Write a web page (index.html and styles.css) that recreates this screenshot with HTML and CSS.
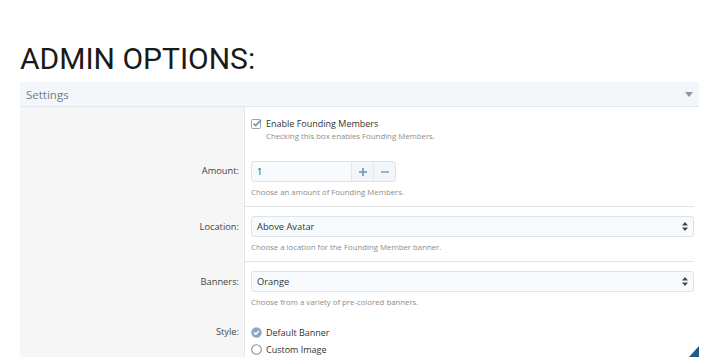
FILE: index.html
```html
<!DOCTYPE html>
<html>
<head>
<meta charset="utf-8">
<link rel="stylesheet" href="styles.css">
</head>
<body>
<div class="page">
  <h1 class="title">ADMIN OPTIONS:</h1>
  <div class="panel">
    <div class="panel-head">
      <span class="head-text">Settings</span>
      <svg class="caret" width="8" height="5" viewBox="0 0 8 5"><path d="M0 0H8L4 5Z" fill="#8c97a3"/></svg>
    </div>
    <div class="panel-body">
      <div class="row row-first">
        <div class="label"></div>
        <div class="field">
          <label class="check">
            <svg width="11" height="11" viewBox="0 0 11 11"><rect x="0.5" y="1.5" width="9" height="9" rx="1" fill="none" stroke="#8ea7c0"/><path d="M2.5 5.5L4.6 7.6L10 2" fill="none" stroke="#6f91b3" stroke-width="1.6"/></svg>
            <span class="check-text">Enable Founding Members</span>
          </label>
          <div class="desc desc-indent">Checking this box enables Founding Members.</div>
        </div>
      </div>
      <div class="row row-amount">
        <div class="label">Amount:</div>
        <div class="field">
          <div class="spinner">
            <div class="spin-input">1</div>
            <div class="spin-btn">
              <svg width="8" height="8" viewBox="0 0 8 8"><path d="M4 0V8M0 4H8" stroke="#8aa3bd" stroke-width="2"/></svg>
            </div>
            <div class="spin-btn">
              <svg width="8" height="8" viewBox="0 0 8 8"><path d="M0 4H8" stroke="#8aa3bd" stroke-width="1.6"/></svg>
            </div>
          </div>
          <div class="desc">Choose an amount of Founding Members.</div>
        </div>
      </div>
      <div class="row row-select divided">
        <div class="label">Location:</div>
        <div class="field">
          <div class="select">
            <span>Above Avatar</span>
            <svg width="6" height="9" viewBox="0 0 6 9"><path d="M0 3.5L3 0L6 3.5ZM0 5.5L3 9L6 5.5Z" fill="#444"/></svg>
          </div>
          <div class="desc">Choose a location for the Founding Member banner.</div>
        </div>
      </div>
      <div class="row row-select divided">
        <div class="label">Banners:</div>
        <div class="field">
          <div class="select">
            <span>Orange</span>
            <svg width="6" height="9" viewBox="0 0 6 9"><path d="M0 3.5L3 0L6 3.5ZM0 5.5L3 9L6 5.5Z" fill="#444"/></svg>
          </div>
          <div class="desc">Choose from a variety of pre-colored banners.</div>
        </div>
      </div>
      <div class="row row-style">
        <div class="label">Style:</div>
        <div class="field">
          <div class="radio">
            <svg width="11" height="11" viewBox="0 0 11 11"><circle cx="5.5" cy="5.5" r="5.2" fill="#8ea8c2"/><path d="M3 5.6L4.8 7.3L8 3.9" fill="none" stroke="#fff" stroke-width="1.4"/></svg>
            <span>Default Banner</span>
          </div>
          <div class="radio">
            <svg width="11" height="11" viewBox="0 0 11 11"><circle cx="5.5" cy="5.5" r="4.8" fill="#fff" stroke="#7f93a7" stroke-width="1.1"/></svg>
            <span>Custom Image</span>
          </div>
        </div>
      </div>
      <div class="corner"></div>
    </div>
  </div>
</div>
</body>
</html>
```
FILE: styles.css
```css
html, body {
  margin: 0;
  padding: 0;
  background: #ffffff;
}
.page {
  padding: 0 16px 0 20px;
  font-family: "Open Sans", "Noto Sans", sans-serif;
  color: #333;
}
.title {
  margin: 41px 0 5px 0;
  font-family: Roboto, sans-serif;
  font-weight: 400;
  font-size: 30px;
  line-height: 36px;
  color: #1a1a1a;
}
.panel {
  position: relative;
  height: 275px;
  overflow: hidden;
}
.panel-head {
  height: 24px;
  background: #f3f7fc;
  border-bottom: 1px solid #e3e8ee;
  display: flex;
  align-items: center;
  justify-content: space-between;
  padding: 0 6px 0 6px;
}
.head-text {
  font-size: 11.5px;
  color: #6d7b89;
}
.panel-body {
  background: linear-gradient(to right, #f6f6f6 0, #f6f6f6 224px, #e4e4e4 224px, #e4e4e4 225px, #ffffff 225px);
  min-height: 260px;
}
.row {
  display: grid;
  grid-template-columns: 225px 1fr;
}
.label {
  text-align: right;
  padding-right: 6px;
  font-size: 9.3px;
  color: #444;
}
.field {
  padding: 0 5px 0 6px;
}
.row-first .field {
  padding-top: 11px;
}
.check {
  display: flex;
  align-items: center;
  gap: 4px;
  height: 11px;
}
.check svg, .radio svg {
  flex: none;
}
.check-text {
  font-size: 9px;
  color: #333;
  line-height: 11px;
}
.desc {
  font-size: 7.8px;
  color: #8c8c8c;
  line-height: 10px;
}
.desc-indent {
  padding-left: 15px;
  margin-top: 2px;
}
.row-amount .label {
  padding-top: 24px;
  line-height: 12px;
}
.row-amount .field {
  padding-top: 20px;
  padding-bottom: 9px;
}
.spinner {
  display: flex;
  width: 145px;
  height: 21px;
  border: 1px solid #dde3ea;
  border-radius: 3px;
  box-sizing: border-box;
  background: #f8fbfe;
  margin-bottom: 5px;
}
.spin-input {
  flex: 1;
  font-size: 9.3px;
  line-height: 19px;
  padding-left: 5px;
  color: #333;
}
.spin-btn {
  width: 21px;
  border-left: 1px solid #e3e8ee;
  background: #f2f5f9;
  display: flex;
  align-items: center;
  justify-content: center;
}
.spin-btn:last-child {
  border-radius: 0 3px 3px 0;
}
.divided .field {
  border-top: 1px solid #e4e4e4;
  padding-top: 9px;
  padding-bottom: 9px;
  margin-right: 5px;
  padding-right: 0;
}
.divided .label {
  padding-top: 15px;
  line-height: 12px;
}
.select {
  height: 21px;
  box-sizing: border-box;
  border: 1px solid #dde3ea;
  border-radius: 3px;
  background: #f8fbfe;
  display: flex;
  align-items: center;
  justify-content: space-between;
  padding: 0 5px 0 5px;
  font-size: 9.3px;
  color: #333;
  margin-bottom: 5px;
}
.row-style .label {
  padding-top: 10px;
  line-height: 12px;
}
.row-style .field {
  padding-top: 10px;
}
.radio {
  display: flex;
  align-items: center;
  gap: 4px;
  height: 12px;
  margin-bottom: 5px;
  font-size: 9px;
  color: #333;
}
.corner {
  position: absolute;
  right: 0;
  bottom: 0;
  width: 0;
  height: 0;
  border-left: 10px solid transparent;
  border-bottom: 11px solid #1e5a8c;
}
```
